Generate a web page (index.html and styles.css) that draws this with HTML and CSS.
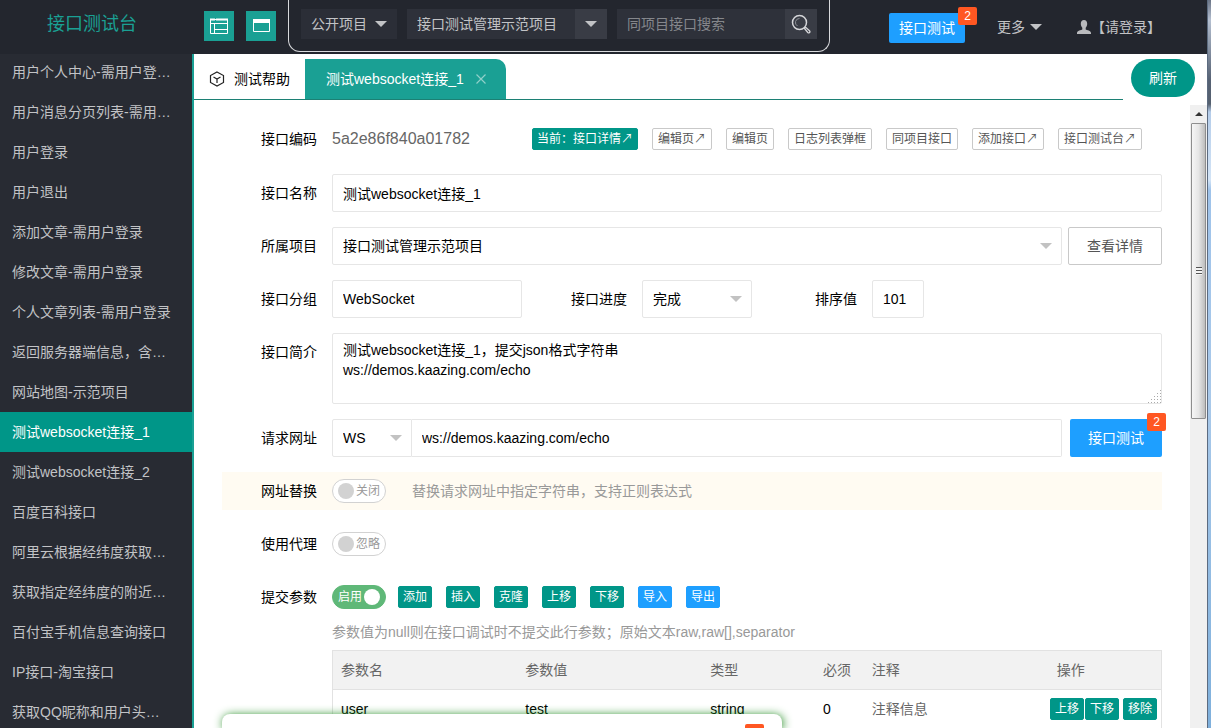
FILE: index.html
```html
<!DOCTYPE html>
<html lang="zh-CN">
<head>
<meta charset="utf-8">
<title>接口测试台</title>
<link rel="stylesheet" href="styles.css">
</head>
<body>
<div class="window">
<div class="app">
  <header class="header">
    <h1 class="logo">接口测试台</h1>
    <div class="tools">
      <button class="tool" type="button" aria-label="侧栏布局"><svg width="20" height="18" viewBox="0 0 20 18" fill="none" stroke="#fff"><path d="M1.500 2.500h17v14h-17z"/><path d="M1 2.500h5M7 2.500h12" stroke-width="2"/><path d="M1 6.500h18M5.500 7v9.500M5.500 12.500h13"/></svg></button>
      <button class="tool" type="button" aria-label="全屏布局"><svg width="20" height="18" viewBox="0 0 20 18" fill="none" stroke="#fff"><path d="M2.500 2.500h16v12h-16z"/><path d="M2 4h17" stroke-width="4"/></svg></button>
    </div>
    <form class="finder">
      <button class="finder-menu" type="button">公开项目<span class="caret"></span></button>
      <div class="combo">
        <input class="combo-text" type="text" value="接口测试管理示范项目" aria-label="项目">
        <button class="combo-btn" type="button" aria-label="选择项目"><span class="caret"></span></button>
      </div>
      <div class="combo">
        <input class="combo-text" type="text" placeholder="同项目接口搜索" aria-label="接口搜索">
        <button class="combo-btn" type="button" aria-label="搜索"><svg width="20" height="20" viewBox="0 0 20 20" fill="none" stroke="#d5d6d9"><circle cx="8.500" cy="8.500" r="7" stroke-width="1.500"/><path d="M8.500 4.500a4 4 0 0 0-2 7.500" stroke="#8d9096"/><path d="M13.500 14.500l1.200-1.200 3.800 3.500a1.200 1.200 0 0 1-1.700 1.700z" stroke-width="1.300"/></svg></button>
      </div>
    </form>
    <div class="header-right">
      <button class="blue-btn blue-btn-small" type="button">接口测试<span class="badge">2</span></button>
      <a class="head-link more" href="#">更多<span class="caret"></span></a>
      <a class="head-link" href="#"><svg width="14" height="14" viewBox="0 0 14 14" fill="#b9babd"><path d="M7 0c2 0 3.200 1.500 3.200 3.800C10.200 5.500 9.500 7 8.700 7.800v1.700c1 .6 5.300 1 5.300 3.500v1H0v-1c0-2.500 4.300-2.900 5.300-3.500V7.800C4.500 7 3.800 5.500 3.800 3.800 3.800 1.500 5 0 7 0z"/></svg>【请登录】</a>
    </div>
  </header>
  <div class="body">
    <nav class="side">
      <a href="#">用户个人中心-需用户登…</a>
      <a href="#">用户消息分页列表-需用…</a>
      <a href="#">用户登录</a>
      <a href="#">用户退出</a>
      <a href="#">添加文章-需用户登录</a>
      <a href="#">修改文章-需用户登录</a>
      <a href="#">个人文章列表-需用户登录</a>
      <a href="#">返回服务器端信息，含…</a>
      <a href="#">网站地图-示范项目</a>
      <a href="#" class="active">测试websocket连接_1</a>
      <a href="#">测试websocket连接_2</a>
      <a href="#">百度百科接口</a>
      <a href="#">阿里云根据经纬度获取…</a>
      <a href="#">获取指定经纬度的附近…</a>
      <a href="#">百付宝手机信息查询接口</a>
      <a href="#">IP接口-淘宝接口</a>
      <a href="#">获取QQ昵称和用户头…</a>
    </nav>
    <main class="main">
      <div class="topbar">
        <div class="tabs">
          <a class="tab" href="#"><svg width="16" height="16" viewBox="0 0 16 16" fill="none" stroke="#222" stroke-width="1.200"><path d="M8 1l6.500 3.500v7L8 15l-6.500-3.500v-7z"/><path d="M4.500 6L8 8l3.500-2M8 8v4"/></svg>测试帮助</a>
          <a class="tab tab-active" href="#">测试websocket连接_1<svg width="10" height="10" viewBox="0 0 10 10" stroke="#8fd0c9" stroke-width="1.200"><path d="M.5 .5l9 9M9.500 .5l-9 9"/></svg></a>
        </div>
        <button class="refresh" type="button">刷新</button>
      </div>
      <div class="pane">
        <form class="form">
          <div class="row row-first">
            <span class="label">接口编码</span>
            <span class="code">5a2e86f840a01782</span>
            <div class="links">
              <a class="mini mini-teal" href="#">当前：接口详情↗</a>
              <a class="mini" href="#">编辑页↗</a>
              <a class="mini" href="#">编辑页</a>
              <a class="mini" href="#">日志列表弹框</a>
              <a class="mini" href="#">同项目接口</a>
              <a class="mini" href="#">添加接口↗</a>
              <a class="mini" href="#">接口测试台↗</a>
            </div>
          </div>
          <div class="row">
            <label class="label" for="name">接口名称</label>
            <input class="input grow" id="name" type="text" value="测试websocket连接_1">
          </div>
          <div class="row">
            <label class="label" for="project">所属项目</label>
            <div class="select grow"><select class="input" id="project"><option>接口测试管理示范项目</option></select></div>
            <button class="detail" type="button">查看详情</button>
          </div>
          <div class="row">
            <label class="label" for="group">接口分组</label>
            <input class="input group" id="group" type="text" value="WebSocket">
            <label class="label label-mid" for="progress">接口进度</label>
            <div class="select progress"><select class="input" id="progress"><option>完成</option></select></div>
            <label class="label label-mid" for="order">排序值</label>
            <input class="input order" id="order" type="text" value="101">
          </div>
          <div class="row">
            <label class="label" for="intro">接口简介</label>
            <textarea class="input grow intro" id="intro">测试websocket连接_1，提交json格式字符串
ws://demos.kaazing.com/echo</textarea>
          </div>
          <div class="row">
            <label class="label" for="url">请求网址</label>
            <div class="select method"><select class="input" aria-label="请求方式"><option>WS</option></select></div>
            <input class="input grow url" id="url" type="text" value="ws://demos.kaazing.com/echo">
            <button class="blue-btn test" type="button">接口测试<span class="badge">2</span></button>
          </div>
          <div class="row row-tint">
            <span class="label">网址替换</span>
            <label class="switch"><input type="checkbox" aria-label="网址替换">关闭</label>
            <span class="note">替换请求网址中指定字符串，支持正则表达式</span>
          </div>
          <div class="row">
            <span class="label">使用代理</span>
            <label class="switch"><input type="checkbox" aria-label="使用代理">忽略</label>
          </div>
          <div class="row">
            <span class="label">提交参数</span>
            <label class="switch switch-on">启用<input type="checkbox" checked aria-label="提交参数"></label>
            <div class="actions">
              <button class="mini mini-teal" type="button">添加</button>
              <button class="mini mini-teal" type="button">插入</button>
              <button class="mini mini-teal" type="button">克隆</button>
              <button class="mini mini-teal" type="button">上移</button>
              <button class="mini mini-teal" type="button">下移</button>
              <button class="mini mini-blue" type="button">导入</button>
              <button class="mini mini-blue" type="button">导出</button>
            </div>
          </div>
          <div class="params">
            <p class="hint">参数值为null则在接口调试时不提交此行参数；原始文本raw,raw[],separator</p>
            <table class="table">
              <colgroup><col class="c-wide"><col class="c-wide"><col class="c-mid"><col class="c-thin"><col class="c-wide"><col class="c-mid"></colgroup>
              <thead><tr><th>参数名</th><th>参数值</th><th>类型</th><th>必须</th><th>注释</th><th>操作</th></tr></thead>
              <tbody><tr>
                <td>user</td><td>test</td><td>string</td><td>0</td><td class="muted">注释信息</td>
                <td class="ops"><div class="ops-list"><div class="pair"><button class="mini mini-teal" type="button">上移</button><button class="mini mini-teal" type="button">下移</button></div><button class="mini mini-teal" type="button">移除</button></div></td>
              </tr></tbody>
            </table>
          </div>
        </form>
        <div class="scroll" aria-hidden="true">
          <div class="scroll-up"></div>
          <div class="thumb"><span class="grip"></span></div>
        </div>
      </div>
    </main>
  </div>
</div>
<div class="edge"></div>
</div>
<div class="popup"><span class="popup-mark"></span></div>
</body>
</html>
```
FILE: styles.css
```css
* { box-sizing: border-box; }
body {
  margin: 0;
  height: 100vh;
  overflow: hidden;
  font: 14px/20px "Liberation Sans", "Noto Sans CJK SC", sans-serif;
  color: #000;
  background: #fff;
}
button, input, select, textarea { font: inherit; color: inherit; margin: 0; }
button { border: 0; padding: 0; cursor: pointer; white-space: nowrap; }
a { color: inherit; text-decoration: none; white-space: nowrap; }

.window { display: flex; height: 100%; }
.app { flex: 1; min-width: 0; display: flex; flex-direction: column; }
.edge {
  width: 4px;
  border-left: 1px solid #5c6b80;
  background: linear-gradient(#6a7486 0, #b4bfd0 20px, #566274 80px, #55606f 104px, #b5cdea 112px, #d3e4f6 180px, #9fc3ea 190px, #a9c9ea 400px, #7fb0dc 100%);
}

/* header */
.header {
  position: relative;
  z-index: 1;
  display: flex;
  height: 54px;
  flex: none;
  background: #23262e;
  color: #c2c3c6;
}
.logo {
  width: 184px;
  margin: 0;
  text-align: center;
  font-size: 18px;
  line-height: 48px;
  font-weight: 400;
  color: #1aa094;
}
.tools { display: flex; gap: 12px; padding: 11px 12px 0 20px; }
.tool {
  display: flex;
  align-items: center;
  justify-content: center;
  width: 30px;
  height: 30px;
  background: #1aa094;
}
.finder {
  display: flex;
  gap: 10px;
  height: 52px;
  padding: 9px 12px;
  border: 1px solid #d8d9dc;
  border-top: 0;
  border-radius: 0 0 12px 12px;
}
.finder-menu {
  display: flex;
  align-items: center;
  justify-content: center;
  gap: 8px;
  width: 96px;
  height: 30px;
  background: #2b2e37;
}
.caret {
  border: 6px solid transparent;
  border-top-color: currentColor;
  border-bottom: 0;
}
.combo { display: flex; width: 200px; height: 30px; background: #2e313a; }
.combo-text { flex: 1; min-width: 0; border: 0; padding: 0 10px; background: none; }
.combo-text::placeholder { color: #85878c; opacity: 1; }
.combo-btn {
  display: flex;
  align-items: center;
  justify-content: center;
  width: 32px;
  background: #393c45;
}
.header-right { display: flex; margin-left: auto; padding: 13px 46px 0 0; }
.blue-btn {
  position: relative;
  border-radius: 2px;
  background: #1e9fff;
  color: #fff;
}
.blue-btn-small { width: 76px; height: 30px; }
.badge {
  position: absolute;
  top: -6px;
  right: -12px;
  width: 19px;
  height: 18px;
  border-radius: 2px;
  background: #ff5722;
  color: #fff;
  font-size: 12px;
  line-height: 18px;
  text-align: center;
}
.head-link { display: flex; align-items: center; height: 28px; }
.more { gap: 5px; margin: 0 35px 0 32px; }

/* sidebar */
.body { display: flex; flex: 1; min-height: 0; }
.side {
  width: 194px;
  flex: none;
  margin-top: -2px;
  border-right: 2px solid #1aa094;
  background: #282b33;
  color: #c2c3c6;
  overflow: hidden;
}
.side a { display: block; padding: 0 12px; line-height: 40px; }
.side .active { background: #009688; color: #fff; }

/* tabs */
.main { flex: 1; min-width: 0; display: flex; flex-direction: column; }
.topbar { display: flex; align-items: flex-end; justify-content: space-between; flex: none; height: 46px; padding-right: 12px; }
.tabs { display: flex; flex: 1; margin-right: 8px; border-bottom: 1px solid #1c8074; }
.tab { display: flex; align-items: center; gap: 9px; height: 40px; padding: 0 15px; }
.tab-active {
  gap: 12px;
  padding: 0 20px 0 21px;
  border-radius: 0 10px 0 0;
  background: #1aa094;
  color: #fff;
}
.refresh {
  width: 64px;
  height: 38px;
  margin-bottom: 3px;
  border-radius: 19px;
  background: #009688;
  color: #fff;
}

/* form */
.pane { display: flex; flex: 1; min-height: 0; padding-top: 5px; overflow: hidden; }
.form { flex: 1; min-width: 0; padding: 15px 28px; }
.row { display: flex; align-items: center; min-height: 38px; margin-bottom: 15px; }
.row-first { margin-bottom: 16px; }
.row-tint { background: #fffbf2; }
.label { width: 95px; margin-right: 15px; flex: none; text-align: right; white-space: nowrap; }
.label-mid { width: auto; margin-left: 49px; }
.label-mid ~ .label-mid { margin-left: 63px; }
.code { width: 200px; font-size: 16px; color: #666; }
.links { display: flex; gap: 14px; }
.mini {
  flex: none;
  height: 22px;
  padding: 0 5px;
  border: 1px solid #c9c9c9;
  border-radius: 2px;
  background: #fff;
  color: #555;
  font-size: 12px;
  line-height: 20px;
}
.mini-teal { background: #009688; border-color: #009688; color: #fff; padding: 0 4px; }
.mini-blue { background: #1e9fff; border-color: #1e9fff; color: #fff; padding: 0 4px; }
.input {
  height: 38px;
  padding: 0 10px;
  border: 1px solid #e6e6e6;
  border-radius: 2px;
  background: #fff;
}
.grow { flex: 1; min-width: 0; }
.select { position: relative; }
.select .input { width: 100%; appearance: none; display: block; }
.select::after {
  content: "";
  position: absolute;
  right: 10px;
  top: 16px;
  border: 6px solid transparent;
  border-top-color: #c2c2c2;
  border-bottom: 0;
  pointer-events: none;
}
.detail {
  width: 94px;
  height: 38px;
  margin-left: 6px;
  border: 1px solid #c9c9c9;
  border-radius: 2px;
  background: #fff;
  color: #555;
}
.group { width: 190px; }
.progress { width: 110px; }
.order { width: 52px; }
.row:has(.intro) { align-items: flex-start; }
.row:has(.intro) .label { line-height: 38px; }
.intro { height: 71px; padding: 6px 10px; resize: vertical; }
.intro::-webkit-resizer {
  background:
    linear-gradient(135deg, #fff 55%, transparent 55%),
    repeating-linear-gradient(90deg, #fff 0 2px, transparent 2px 3px),
    repeating-linear-gradient(#fff 0 2px, #aaa 2px 3px);
}
.method { width: 80px; }
.method .input { border-radius: 2px 0 0 2px; }
.url { border-left: 0; border-radius: 0 2px 2px 0; }
.test { width: 92px; height: 38px; margin-left: 8px; }
.test .badge { right: -4px; }
.switch {
  display: flex;
  align-items: center;
  gap: 2px;
  width: 54px;
  height: 24px;
  padding: 0 5px;
  border: 1px solid #d2d2d2;
  border-radius: 12px;
  background: #fff;
  color: #999;
  font-size: 12px;
  white-space: nowrap;
}
.switch input {
  appearance: none;
  flex: none;
  width: 16px;
  height: 16px;
  border-radius: 50%;
  background: #d2d2d2;
}
.switch-on { background: #5fb878; border-color: #5fb878; color: #fff; }
.switch-on input { background: #fff; }
.note { margin-left: 26px; color: #999; }
.actions { display: flex; gap: 14px; margin-left: 12px; }
.params { margin: -9px 0 0 110px; }
.hint { margin: 0 0 8px; color: #999; }

/* parameter table */
.table {
  width: 100%;
  table-layout: fixed;
  border-collapse: collapse;
  border: 1px solid #e2e2e2;
}
.c-wide { width: 22.3%; }
.c-mid { width: 13.6%; }
.c-thin { width: 5.9%; }
.table th, .table td { height: 39px; padding: 0 8px; text-align: left; border-bottom: 1px solid #e2e2e2; }
.table th { background: #f2f2f2; color: #666; font-weight: 400; white-space: nowrap; }
.table .muted { color: #666; }
.table .ops { padding: 0 4px 0 0; }
.ops-list { display: flex; justify-content: flex-end; gap: 4px; }
.pair { display: flex; gap: 1px; }

/* scrollbar */
.scroll { width: 17px; flex: none; padding: 0 1px; background: #f0f0f0; }
.scroll-up { display: flex; align-items: center; justify-content: center; height: 18px; }
.scroll-up::before { content: ""; border: 4px solid transparent; border-top: 0; border-bottom-color: #333; }
.thumb {
  display: flex;
  align-items: center;
  justify-content: center;
  height: 47.5%;
  border: 1px solid #8e8e8e;
  border-radius: 1px;
  background: linear-gradient(90deg, #f6f6f6, #e6e6e6 50%, #bdbdbd);
}
.grip { width: 6px; height: 8px; background: repeating-linear-gradient(#555 0 1px, #f4f4f4 1px 3px); }

/* bottom popup */
.popup {
  position: fixed;
  z-index: 2;
  left: 222px;
  bottom: 0;
  width: 560px;
  height: 14px;
  border-radius: 8px 8px 0 0;
  background: #fff;
  box-shadow: 1px 1px 10px #1f8a1f;
}
.popup-mark {
  position: absolute;
  right: 18px;
  bottom: 0;
  width: 19px;
  height: 4px;
  border-radius: 2px 2px 0 0;
  background: #ff5722;
}
```
